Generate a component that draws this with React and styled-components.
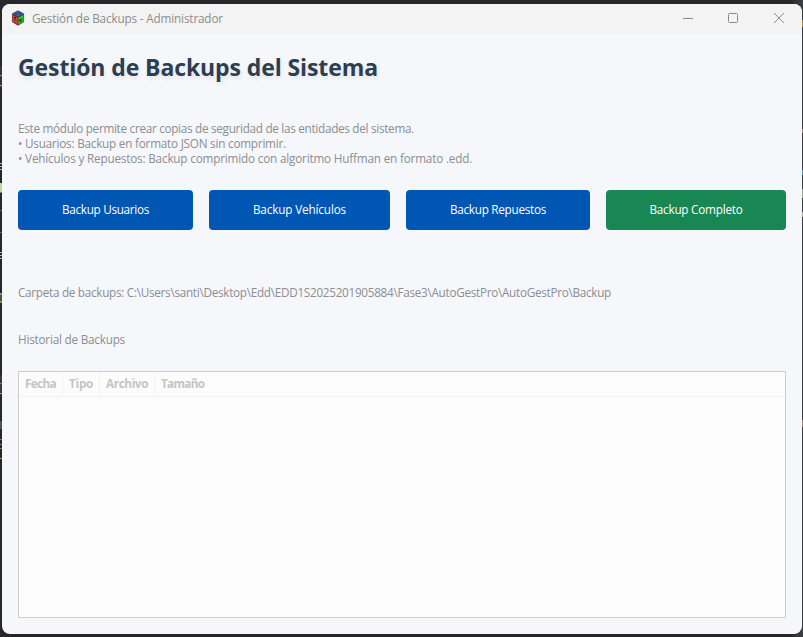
import React from 'react';
import styled, { createGlobalStyle } from 'styled-components';

const GlobalStyle = createGlobalStyle`
  * { box-sizing: border-box; }
  body { margin: 0; }
`;

const Desktop = styled.div`
  position: relative;
  width: 803px;
  height: 637px;
  padding: 4px 1px 3px 2px;
  overflow: hidden;
  background: linear-gradient(90deg, #29262b 0, #29262b 790px, #3c3d42 802px);
  font: 11.72px/15px 'Open Sans', 'Noto Sans', sans-serif;
`;

const EdgeMark = styled.span`
  position: absolute;
  ${({ $side }) => $side}: 0;
  top: ${({ $top }) => $top}px;
  width: ${({ $side }) => ($side === 'left' ? 2 : 1)}px;
  height: ${({ $height = 1 }) => $height}px;
  background: ${({ $color }) => $color};
`;

const Window = styled.main`
  position: relative;
  display: flex;
  flex-direction: column;
  width: 800px;
  height: 630px;
  overflow: hidden;
  border-radius: 8px;
  background: #f5f7fb;
`;

const TitleBar = styled.header`
  display: flex;
  align-items: center;
  flex: 0 0 30px;
  padding-left: 9px;
  background: #f3f3f3;
`;

const AppIcon = styled.svg`
  width: 14px;
  height: 16px;
  margin: 0 7px 2px 0;
`;

const WindowTitle = styled.span`
  flex: 1;
  padding-bottom: 1px;
  color: #8d8d8d;
  letter-spacing: -0.154px;
`;

const WindowButton = styled.button`
  display: grid;
  place-items: center;
  width: ${({ $width }) => $width}px;
  height: 30px;
  padding: 0 0 2px;
  border: 0;
  background: transparent;
  color: #8b8b8b;

  svg {
    display: block;
    fill: none;
    stroke: currentColor;
  }
`;

const Content = styled.section`
  display: flex;
  flex-direction: column;
  flex: 1;
  padding: 16px;
`;

const Heading = styled.h1`
  margin: 0 0 37px;
  color: #2c3e50;
  font-size: 23px;
  font-weight: 700;
  line-height: 34px;
  letter-spacing: -0.1px;
  white-space: nowrap;
  text-shadow: 1px 3px 4px rgba(0, 0, 0, 0.07);
`;

const Text = styled.p`
  margin: 0;
  color: #8c8e90;
  letter-spacing: ${({ $spacing }) => $spacing}px;
  white-space: nowrap;
`;

const Actions = styled.div`
  display: grid;
  grid-template-columns: 175px 181px 184px 180px;
  gap: 16px;
  margin: 24px 0 55px;
`;

const ActionButton = styled.button`
  height: 40px;
  padding: 0 0 2px;
  border: 0;
  border-radius: 4px;
  background: ${({ $color }) => $color};
  color: #fff;
  font: inherit;
  letter-spacing: ${({ $spacing }) => $spacing}px;
`;

const HistoryTitle = styled(Text).attrs({ as: 'h2' })`
  margin: 32px 0 24px;
  font-size: inherit;
  font-weight: 400;
`;

const HistoryTable = styled.div`
  flex: 1;
  border: 1px solid #d0cdca;
  background: #fcfcfc;
`;

const TableHeader = styled.div`
  display: flex;
  height: 25px;
  border-bottom: 1px solid #f2f2f2;
`;

const HeaderCell = styled.div`
  width: ${({ $width }) => $width};
  padding: 4px 0 0 6px;
  border-right: ${({ $last }) => ($last ? '0' : '1px solid #f2f2f2')};
  color: #c4c5c5;
  font-weight: 700;
  line-height: 15px;
  letter-spacing: ${({ $spacing }) => $spacing}px;
  white-space: nowrap;
`;

const edgeMarks = [
  { side: 'left', top: 66, height: 22, color: '#38353a' },
  { side: 'left', top: 75, color: '#a88f55' },
  { side: 'left', top: 85, color: '#a88f55' },
  { side: 'left', top: 163, color: '#b7b5b5' },
  { side: 'left', top: 166, color: '#b7b5b5' },
  { side: 'left', top: 169, color: '#b7b5b5' },
  { side: 'left', top: 183, height: 9, color: '#b9d6a3' },
  { side: 'left', top: 192, color: '#438fc0' },
  { side: 'left', top: 210, color: '#666366' },
  { side: 'left', top: 232, color: '#666366' },
  { side: 'left', top: 252, color: '#b7b5b5' },
  { side: 'left', top: 255, color: '#b7b5b5' },
  { side: 'left', top: 258, color: '#b7b5b5' },
  { side: 'left', top: 293, height: 10, color: '#a88f35' },
  { side: 'left', top: 295, height: 6, color: '#315b53' },
  { side: 'left', top: 375, height: 20, color: '#39373b' },
  { side: 'left', top: 383, color: '#a66b43' },
  { side: 'left', top: 393, color: '#b59744' },
  { side: 'left', top: 421, height: 8, color: '#555257' },
  { side: 'left', top: 439, color: '#ad702c' },
  { side: 'left', top: 444, color: '#ad702c' },
  { side: 'left', top: 448, color: '#ad702c' },
  { side: 'left', top: 458, color: '#b59744' },
  { side: 'right', top: 20, height: 7, color: '#a98549' },
  { side: 'right', top: 129, height: 4, color: '#a18e80' },
  { side: 'right', top: 170, height: 5, color: '#6394ad' },
  { side: 'right', top: 189, height: 9, color: '#9da291' },
  { side: 'right', top: 212, height: 5, color: '#a5a398' },
  { side: 'right', top: 420, height: 7, color: '#988b84' },
];

const actions = [
  { label: 'Backup Usuarios', color: '#0056b3', spacing: -0.3 },
  { label: 'Backup Vehículos', color: '#0056b3', spacing: -0.14 },
  { label: 'Backup Repuestos', color: '#0056b3', spacing: -0.27 },
  { label: 'Backup Completo', color: '#198754', spacing: -0.22 },
];

const columns = [
  { label: 'Fecha', width: '44px', spacing: -0.63 },
  { label: 'Tipo', width: '37px', spacing: -0.24 },
  { label: 'Archivo', width: '55px', spacing: -0.37 },
  { label: 'Tamaño', width: 'auto', spacing: -0.7 },
];

export default function App() {
  return (
    <Desktop>
      <GlobalStyle />
      {edgeMarks.map(({ side, top, height, color }) => (
        <EdgeMark key={`${side}-${top}`} $side={side} $top={top} $height={height} $color={color} />
      ))}
      <Window>
        <TitleBar>
          <AppIcon viewBox="0 0 14 16" aria-hidden="true">
            <path d="M7 .8 12.6 3.7v8.2L7 15.2 1.4 11.9V3.7z" fill="#333" stroke="#444" strokeWidth=".8" />
            <path d="M7 1.2 12.3 4 7 6.8 1.7 4z" fill="#3465b4" />
            <path d="M1.6 5 6.6 7.6v6.8L1.6 11.4z" fill="#e83434" />
            <path d="m12.4 5-5 2.6v6.8l5-3z" fill="#2fc52f" />
            <path d="M4 4.2h2M7.5 3l2 1M3 7.5h2m-1 0v3M9 9v3m0-1.5 2-2m-2 2 2 .5" fill="none" stroke="#222" strokeWidth=".9" />
          </AppIcon>
          <WindowTitle>Gestión de Backups - Administrador</WindowTitle>
          <WindowButton $width={46} aria-label="Minimizar">
            <svg width="12" height="12"><path d="M1 6.5h10" /></svg>
          </WindowButton>
          <WindowButton $width={44} aria-label="Maximizar">
            <svg width="12" height="12"><rect x="1.5" y="1.5" width="9" height="9" rx="1" /></svg>
          </WindowButton>
          <WindowButton $width={47} aria-label="Cerrar">
            <svg width="13" height="12"><path d="m2 1 10 10M12 1 2 11" /></svg>
          </WindowButton>
        </TitleBar>
        <Content>
          <Heading>Gestión de Backups del Sistema</Heading>
          <Text $spacing={-0.29}>Este módulo permite crear copias de seguridad de las entidades del sistema.</Text>
          <Text $spacing={-0.22}>• Usuarios: Backup en formato JSON sin comprimir.</Text>
          <Text $spacing={-0.182}>• Vehículos y Repuestos: Backup comprimido con algoritmo Huffman en formato .edd.</Text>
          <Actions>
            {actions.map(({ label, color, spacing }) => (
              <ActionButton key={label} $color={color} $spacing={spacing}>{label}</ActionButton>
            ))}
          </Actions>
          <Text $spacing={-0.282}>
            {'Carpeta de backups: C:\\Users\\santi\\Desktop\\Edd\\EDD1S2025201905884\\Fase3\\AutoGestPro\\AutoGestPro\\Backup'}
          </Text>
          <HistoryTitle $spacing={-0.215}>Historial de Backups</HistoryTitle>
          <HistoryTable>
            <TableHeader>
              {columns.map(({ label, width, spacing }, index) => (
                <HeaderCell key={label} $width={width} $spacing={spacing} $last={index === columns.length - 1}>
                  {label}
                </HeaderCell>
              ))}
            </TableHeader>
          </HistoryTable>
        </Content>
      </Window>
    </Desktop>
  );
}
